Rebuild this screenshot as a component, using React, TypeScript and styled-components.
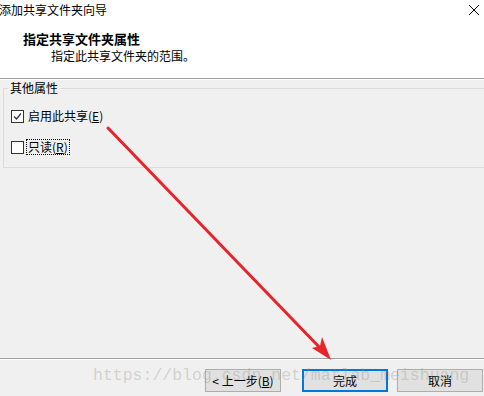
import styled, { createGlobalStyle } from 'styled-components'

const GlobalStyle = createGlobalStyle`
  html, body {
    margin: 0;
    padding: 0;
    background: #f0f0f0;
  }
  body {
    font-family: "Noto Sans CJK SC", "Microsoft YaHei", sans-serif;
    font-size: 12px;
    color: #000;
  }
`

const Window = styled.div`
  position: relative;
  width: 484px;
  height: 396px;
  overflow: hidden;
  background: #f0f0f0;
  display: flex;
  flex-direction: column;
`

const Header = styled.div`
  height: 78px;
  flex: none;
  background: #fff;
  border-bottom: 1px solid #a0a0a0;
  box-shadow: 0 1px 0 #fff;
  display: flex;
  flex-direction: column;
`

const TitleBar = styled.div`
  height: 17px;
  display: flex;
  align-items: center;
  justify-content: space-between;
  padding: 0 4px 0 0;
  margin-left: -1px;
  margin-top: 1px;
  line-height: 16px;
`

const TitleText = styled.span`
  font-size: 12px;
  color: #000;
`

const CloseIcon = styled.svg`
  width: 12px;
  height: 12px;
  margin-top: 1px;
`

const Heading = styled.div`
  margin: 13px 0 0 23px;
  font-size: 13px;
  font-weight: bold;
  line-height: 16px;
`

const SubHeading = styled.div`
  margin: 1px 0 0 51px;
  font-size: 12px;
  line-height: 16px;
`

const Body = styled.div`
  flex: 1;
  padding: 2px 0 0 3px;
`

const GroupBox = styled.fieldset`
  margin: 0 -10px 0 0;
  padding: 14px 0 0 7px;
  height: 87px;
  min-inline-size: 0;
  box-sizing: border-box;
  border: 1px solid #dcdcdc;
  border-radius: 0;
  display: flex;
  flex-direction: column;
  gap: 17px;
`

const GroupLegend = styled.legend`
  padding: 0 2px;
  margin-left: -3px;
  font-size: 12px;
  line-height: 14px;
  height: 14px;
`

const CheckRow = styled.label`
  display: flex;
  align-items: center;
  gap: 3px;
  height: 14px;
  line-height: 14px;
`

const CheckBox = styled.span`
  width: 11px;
  height: 11px;
  border: 1px solid #333;
  background: #fff;
  display: flex;
  align-items: center;
  justify-content: center;
`

const CheckLabel = styled.span<{ $focused?: boolean }>`
  outline: ${({ $focused }) => ($focused ? '1px dotted #000' : 'none')};
  outline-offset: 0;
  padding: 0 1px;
`

const Key = styled.span`
  text-decoration: underline;
`

const Footer = styled.div`
  height: 38px;
  flex: none;
  border-top: 1px solid #a0a0a0;
  box-shadow: inset 0 1px 0 #fff;
  display: flex;
  justify-content: flex-end;
  align-items: flex-start;
  padding: 10px 1px 0 0;
  box-sizing: border-box;
`

const Button = styled.button<{ $primary?: boolean; $width: number }>`
  width: ${({ $width }) => $width}px;
  height: 23px;
  margin-left: ${({ $primary }) => ($primary ? '21px' : '9px')};
  background: #e1e1e1;
  border: ${({ $primary }) => ($primary ? '2px solid #0078d7' : '1px solid #adadad')};
  font-family: "Noto Sans CJK SC", "Microsoft YaHei", sans-serif;
  font-size: 12px;
  color: #000;
  padding: 0;
  display: flex;
  align-items: center;
  justify-content: center;
`

const Watermark = styled.div`
  position: absolute;
  left: 93px;
  top: 366px;
  font-family: "Liberation Mono", monospace;
  font-size: 16.5px;
  color: rgba(150, 150, 140, 0.35);
  white-space: nowrap;
  pointer-events: none;
`

const ArrowLayer = styled.svg`
  position: absolute;
  left: 0;
  top: 0;
  width: 484px;
  height: 396px;
  pointer-events: none;
`

export default function App() {
  return (
    <>
      <GlobalStyle />
      <Window>
        <Header>
          <TitleBar>
            <TitleText>添加共享文件夹向导</TitleText>
            <CloseIcon viewBox="0 0 12 12">
              <path d="M1 1 L11 11 M11 1 L1 11" stroke="#000" strokeWidth="1" />
            </CloseIcon>
          </TitleBar>
          <Heading>指定共享文件夹属性</Heading>
          <SubHeading>指定此共享文件夹的范围。</SubHeading>
        </Header>
        <Body>
          <GroupBox>
            <GroupLegend>其他属性</GroupLegend>
            <CheckRow>
              <CheckBox>
                <svg width="9" height="9" viewBox="0 0 9 9">
                  <path d="M1 4.5 L3.5 7 L8 1.5" stroke="#333" strokeWidth="1.2" fill="none" />
                </svg>
              </CheckBox>
              <CheckLabel>
                启用此共享(<Key>E</Key>)
              </CheckLabel>
            </CheckRow>
            <CheckRow>
              <CheckBox />
              <CheckLabel $focused>
                只读(<Key>R</Key>)
              </CheckLabel>
            </CheckRow>
          </GroupBox>
        </Body>
        <Footer>
          <Button $width={76}>
            &lt; 上一步(<Key>B</Key>)
          </Button>
          <Button $primary $width={86}>
            完成
          </Button>
          <Button $width={86}>取消</Button>
        </Footer>
        <Watermark>https://blog.csdn.net/matlab_meishuang</Watermark>
        <ArrowLayer viewBox="0 0 484 396">
          <line x1="108" y1="128" x2="322" y2="350" stroke="#e8242b" strokeWidth="3" strokeLinecap="round" />
          <path d="M331 360 L312 348 L320 346 L322 337 Z" fill="#e8242b" />
        </ArrowLayer>
      </Window>
    </>
  )
}
